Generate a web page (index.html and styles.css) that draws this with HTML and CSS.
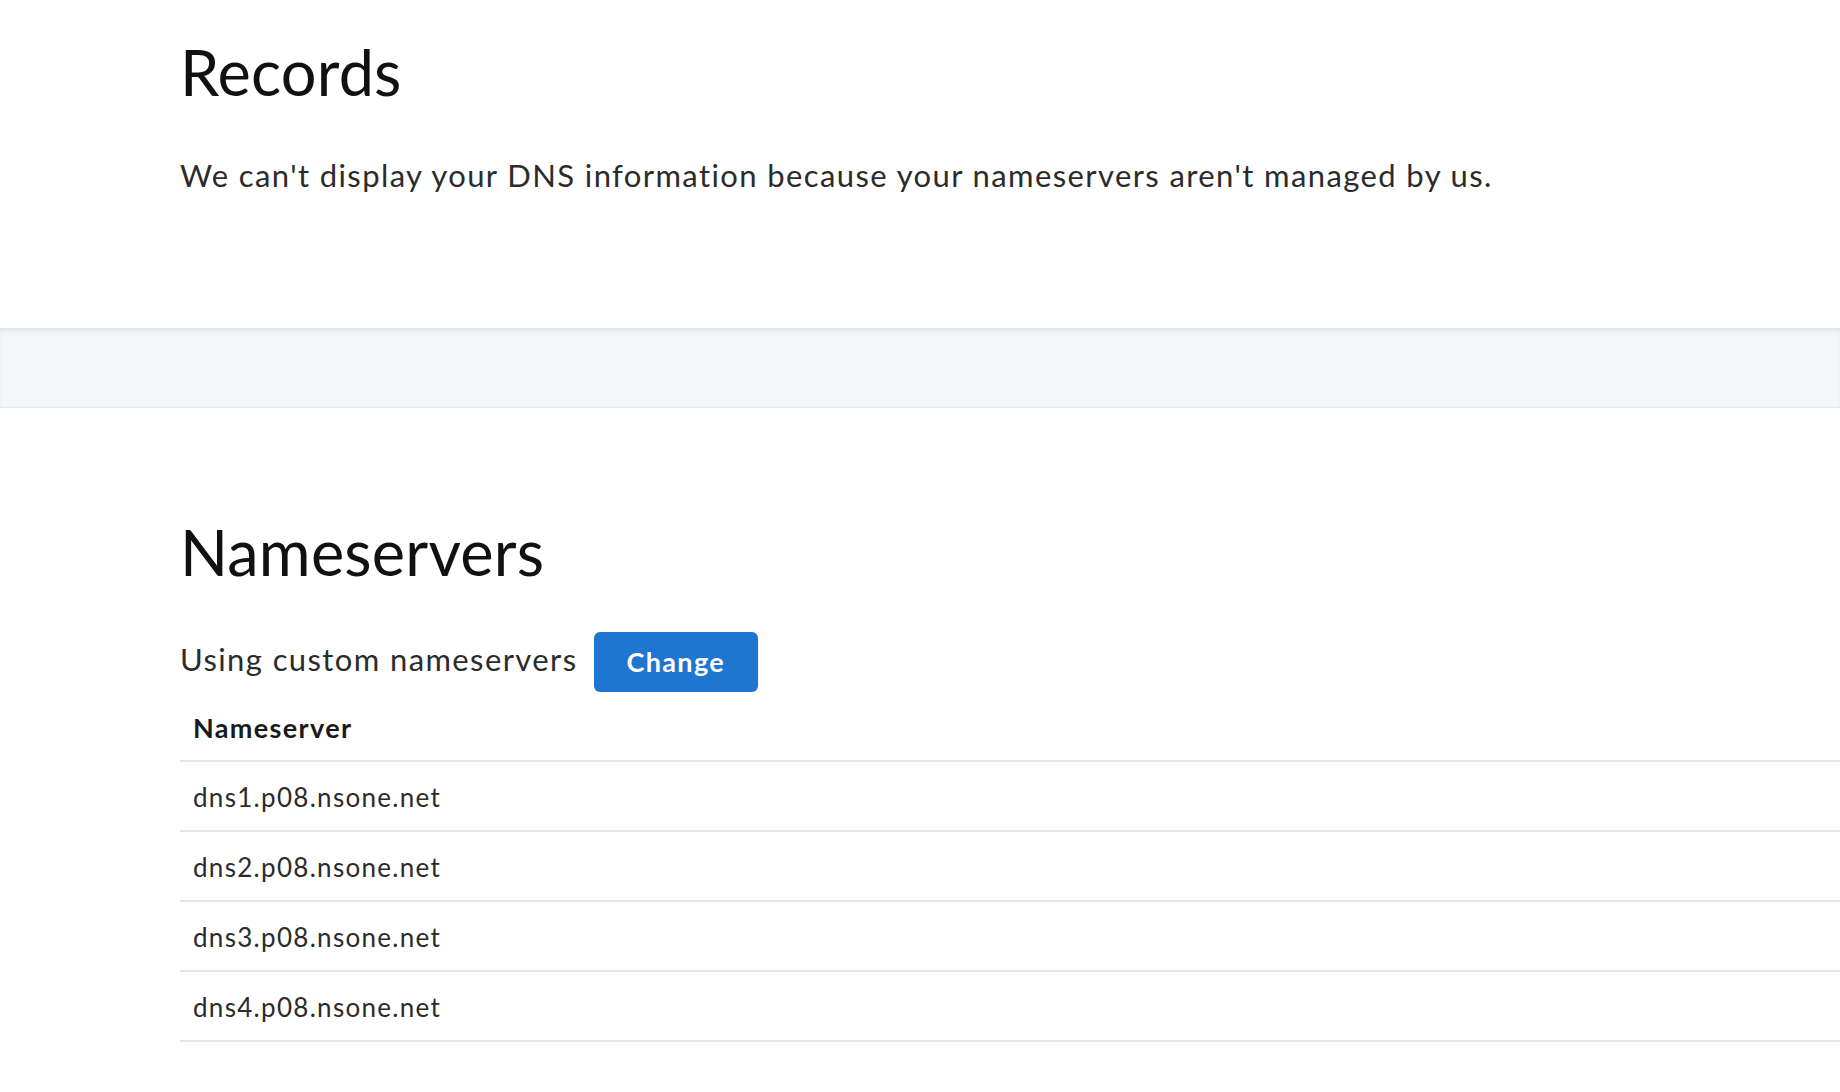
FILE: index.html
```html
<!DOCTYPE html>
<html lang="en">
<head>
<meta charset="utf-8">
<title>DNS</title>
<link rel="stylesheet" href="styles.css">
</head>
<body>
<section class="section records">
  <h1 class="title">Records</h1>
  <p class="lead">We can't display your DNS information because your nameservers aren't managed by us.</p>
</section>
<div class="band"></div>
<section class="section nameservers">
  <h1 class="title">Nameservers</h1>
  <div class="status">
    <span class="status-text">Using custom nameservers</span>
    <button class="btn" type="button">Change</button>
  </div>
  <table class="ns-table">
    <thead>
      <tr><th>Nameserver</th></tr>
    </thead>
    <tbody>
      <tr><td>dns1.p08.nsone.net</td></tr>
      <tr><td>dns2.p08.nsone.net</td></tr>
      <tr><td>dns3.p08.nsone.net</td></tr>
      <tr><td>dns4.p08.nsone.net</td></tr>
    </tbody>
  </table>
</section>
</body>
</html>
```
FILE: styles.css
```css
html, body {
  margin: 0;
  padding: 0;
  background: #ffffff;
}
body {
  font-family: Lato, "Liberation Sans", sans-serif;
  color: #2b2b2b;
}
.section {
  padding-left: 180px;
}
.title {
  margin: 0;
  font-family: Lato, "Liberation Sans", sans-serif;
  font-weight: 400;
  font-size: 63px;
  line-height: 74px;
  letter-spacing: 0.2px;
  color: #111111;
}
.records {
  padding-top: 35px;
  padding-bottom: 131px;
}
.lead {
  margin: 44px 0 0 0;
  font-size: 31px;
  line-height: 44px;
  letter-spacing: 0.045em;
}
.band {
  height: 80px;
  background: #f5f6f8;
  box-shadow: inset 0 5px 6px -3px rgba(0, 0, 0, 0.10), inset 0 -2px 2px -1px rgba(0, 0, 0, 0.07);
}
.nameservers {
  padding-top: 107px;
  padding-bottom: 40px;
}
.status {
  display: flex;
  align-items: center;
  gap: 16px;
  margin-top: 43px;
}
.status-text {
  font-size: 31px;
  line-height: 38px;
  letter-spacing: 0.045em;
  margin-bottom: 7px;
}
.btn {
  height: 60px;
  padding: 0 33px 2px;
  border: none;
  border-radius: 6px;
  background: #1f76d0;
  color: #ffffff;
  font-family: Lato, "Liberation Sans", sans-serif;
  font-weight: 700;
  font-size: 27px;
  letter-spacing: 0.05em;
}
.ns-table {
  width: 100%;
  border-collapse: collapse;
}
.ns-table th,
.ns-table td {
  text-align: left;
  vertical-align: middle;
  padding: 20px 13px 18px;
  line-height: 30px;
  font-size: 26px;
  letter-spacing: 0.05em;
  border-bottom: 2px solid #e6e6e6;
}
.ns-table th {
  padding-top: 21px;
  padding-bottom: 17px;
  font-size: 27px;
  font-weight: 700;
  color: #1a1a1a;
}
.ns-table td {
  font-weight: 400;
}
```
